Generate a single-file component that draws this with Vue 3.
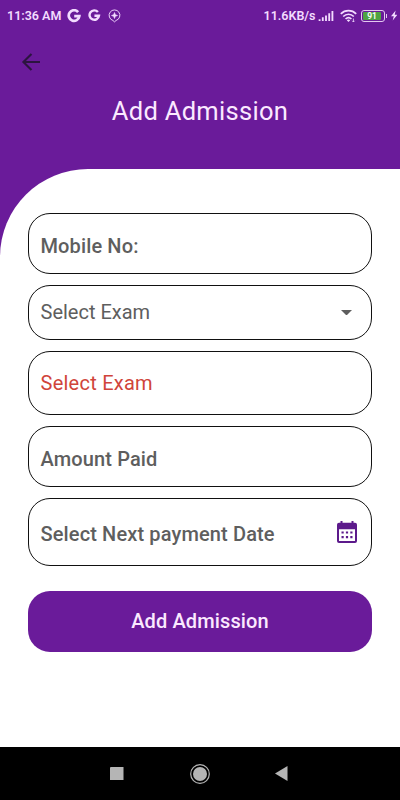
<template>
  <div class="screen">
    <header class="top">
      <div class="status-bar">
        <span class="status-bar__time">11:36 AM</span>
        <svg v-for="n in 2" :key="n" class="google" :class="'google--' + n" viewBox="0 0 14 14">
          <path d="M11.1 3.1A5.3 5.3 0 1 0 12.3 7.2H7.2" fill="none" stroke="currentColor" stroke-width="2.7" />
        </svg>
        <svg class="pin" viewBox="0 0 14 15">
          <path d="M7 13.8L5.3 12.3A5.8 5.8 0 1 1 8.7 12.3Z" fill="none" stroke="currentColor" stroke-width="1" />
          <path d="M7 3.8L7.9 6.1L10.2 7L7.9 7.9L7 10.2L6.1 7.9L3.8 7L6.1 6.1Z" fill="currentColor" stroke="currentColor" stroke-width=".7" />
        </svg>
        <span class="status-bar__speed">11.6KB/s</span>
        <svg class="signal" viewBox="0 0 16 12">
          <path d="M1 12V10M4.5 12V8M8 12V6M11.5 12V3.5M15 12V1" stroke="currentColor" stroke-width="2" />
        </svg>
        <svg class="wifi" viewBox="0 0 17 14">
          <g fill="none" stroke="currentColor" stroke-width="1.7">
            <path d="M.8 4.8C5 .5 12 .5 16.2 4.8" />
            <path d="M3.2 7.5C6.2 4.5 10.8 4.5 13.8 7.5" />
            <path d="M5.6 10C7.3 8.3 9.7 8.3 11.4 10" />
          </g>
          <path d="M6.8 11.3Q8.5 9.9 10.2 11.3L8.5 13Z" fill="currentColor" />
          <path d="M13.4 9.5V13M12.2 11.8L13.4 13L14.6 11.8" fill="none" stroke="currentColor" stroke-width=".8" />
        </svg>
        <span class="battery"><span class="battery__level">91</span></span>
        <svg class="bolt" viewBox="0 0 7 11">
          <path d="M5 0L0 6.2H3L1.8 11L7 4.6H4Z" fill="currentColor" />
        </svg>
      </div>
      <svg class="back" viewBox="0 0 20 20">
        <path d="M19 10H2.6M10.5 1.9L2.4 10L10.5 18.1" fill="none" stroke="currentColor" stroke-width="2.1" />
      </svg>
      <h1 class="title">Add Admission</h1>
    </header>

    <main class="sheet">
      <form class="form" @submit.prevent>
        <div v-for="field in fields" :key="field.id" class="field" :class="'field--' + field.id">
          <span class="field__label">{{ field.label }}</span>
          <svg v-if="field.icon === 'arrow'" class="arrow" viewBox="0 0 10 5">
            <path d="M0 0H10L5 5Z" fill="currentColor" />
          </svg>
          <svg v-if="field.icon === 'calendar'" class="calendar" viewBox="0 0 20 22">
            <path
              fill="currentColor"
              fill-rule="evenodd"
              d="M3.5 0H5.5V1.8H14.5V0H16.5V1.8H18Q20 1.8 20 3.8V20Q20 22 18 22H2Q0 22 0 20V3.8Q0 1.8 2 1.8H3.5ZM2 8.2V20H18V8.2Z"
            />
            <path d="M4.5 11.5H15.5M4.5 16.2H15.5" stroke="currentColor" stroke-width="2.2" stroke-dasharray="2.2 2.2" />
          </svg>
        </div>
        <button class="submit">Add Admission</button>
      </form>
    </main>

    <nav class="nav">
      <svg class="nav__recent" viewBox="0 0 14 14"><rect width="14" height="14" rx=".5" fill="currentColor" /></svg>
      <svg class="nav__home" viewBox="0 0 20 20">
        <circle cx="10" cy="10" r="9.3" fill="none" stroke="currentColor" stroke-width="1.2" />
        <circle cx="10" cy="10" r="7" fill="currentColor" />
      </svg>
      <svg class="nav__back" viewBox="0 0 13 15"><path d="M12.5 0V15L0 7.5Z" fill="currentColor" /></svg>
    </nav>
  </div>
</template>

<script setup>
const fields = [
  { id: 'mobile', label: 'Mobile No:' },
  { id: 'exam', label: 'Select Exam', icon: 'arrow' },
  { id: 'error', label: 'Select Exam' },
  { id: 'amount', label: 'Amount Paid' },
  { id: 'date', label: 'Select Next payment Date', icon: 'calendar' },
];
</script>

<style>
body {
  margin: 0;
}
</style>

<style scoped>
.screen {
  width: 400px;
  height: 800px;
  display: flex;
  flex-direction: column;
  overflow: hidden;
  background: #6a1b9a;
  font-family: Roboto, 'Liberation Sans', sans-serif;
}

svg {
  display: block;
  flex: none;
}

.top {
  height: 168.5px;
  flex: none;
}

.status-bar {
  height: 31px;
  box-sizing: border-box;
  padding: 0 3px 0 7px;
  display: flex;
  align-items: center;
  color: #f3dcff;
  font-size: 12.5px;
  font-weight: 600;
  white-space: nowrap;
}

.google--1 {
  width: 14px;
  height: 14px;
  margin-left: 6px;
}

.google--2 {
  width: 12.5px;
  height: 13px;
  margin-left: 7px;
}

.pin {
  width: 13px;
  height: 14px;
  margin-left: 7px;
}

.status-bar__speed {
  margin-left: auto;
}

.signal {
  width: 16px;
  height: 11px;
  margin-left: 2px;
}

.wifi {
  width: 17px;
  height: 14px;
  margin-left: 6px;
}

.battery {
  position: relative;
  width: 24px;
  height: 12px;
  box-sizing: border-box;
  margin: 0 5.5px 0 4.5px;
  padding: 1px;
  border: 1px solid #e3c9f0;
  border-radius: 3px;
}

.battery::after {
  content: '';
  position: absolute;
  right: -3px;
  top: 3px;
  width: 1.5px;
  height: 4px;
  background: #e3c9f0;
}

.battery__level {
  display: block;
  width: 18px;
  height: 8px;
  border-radius: 1px;
  background: #4fa343;
  color: #fff;
  font-size: 8.5px;
  line-height: 8px;
  text-align: center;
}

.bolt {
  width: 6.5px;
  height: 11px;
}

.back {
  width: 20px;
  height: 20px;
  margin: 20.5px 0 0 21px;
  color: #2c1440;
}

.title {
  margin: 23.5px 0 0;
  color: #fbe9ff;
  font-size: 25.5px;
  font-weight: 400;
  line-height: 32px;
  letter-spacing: 0.3px;
  text-align: center;
}

.sheet {
  flex: 1;
  padding: 44px 28px 0;
  border-top-left-radius: 88px;
  background: #fff;
}

.form {
  display: flex;
  flex-direction: column;
  gap: 10.7px;
}

.field {
  height: 61.3px;
  box-sizing: border-box;
  padding: 5px 15px 0 11.5px;
  display: flex;
  align-items: center;
  justify-content: space-between;
  border: 1px solid #111;
  border-radius: 22px;
  color: #5e5e5e;
  font-size: 20px;
  font-weight: 500;
  letter-spacing: 0.13px;
}

.field--exam {
  height: 55.2px;
  margin-top: 0.3px;
  padding-top: 0;
  padding-right: 19px;
  font-weight: 400;
  letter-spacing: 0;
}

.field--error {
  height: 64.5px;
  padding-top: 1px;
  color: #d0443a;
  font-weight: 400;
  letter-spacing: 0.25px;
}

.field--date {
  height: 68px;
  padding-right: 14px;
}

.arrow {
  width: 11px;
  height: 5.5px;
}

.calendar {
  width: 20px;
  height: 22px;
  margin-top: -5px;
  color: #5c1a8b;
}

.submit {
  height: 61.5px;
  margin-top: 14px;
  padding: 0;
  border: 0;
  border-radius: 22px;
  background: #6a1b9a;
  color: #fbe9ff;
  font-family: inherit;
  font-size: 20px;
  font-weight: 500;
  letter-spacing: 0.13px;
}

.nav {
  height: 53px;
  flex: none;
  box-sizing: border-box;
  padding: 0 112px 0 110px;
  display: flex;
  align-items: center;
  justify-content: space-between;
  background: #000;
  color: #b5b5b5;
}

.nav__recent {
  width: 13.5px;
  height: 13.5px;
}

.nav__home {
  width: 20px;
  height: 20px;
  margin-left: 1px;
}

.nav__back {
  width: 13px;
  height: 15px;
}
</style>
